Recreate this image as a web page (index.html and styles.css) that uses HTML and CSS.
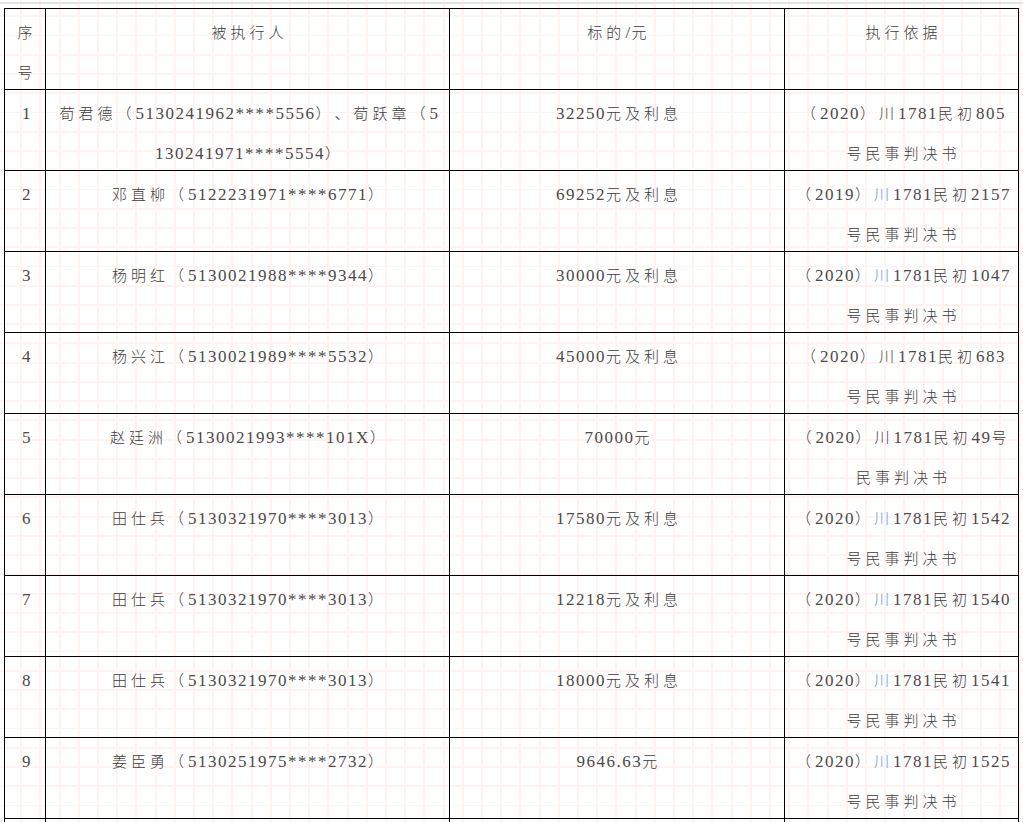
FILE: index.html
```html
<!DOCTYPE html>
<html lang="zh-CN">
<head>
<meta charset="utf-8">
<title>执行案件</title>
<link rel="stylesheet" href="styles.css">
</head>
<body>
<div class="topline"></div>
<div class="page">
<table class="tbl">
  <colgroup>
    <col class="w1"><col class="w2"><col class="w3"><col class="w4">
  </colgroup>
  <tr>
    <td class="c1"><div class="c">序号</div></td>
    <td class="c2"><div class="c">被执行人</div></td>
    <td class="c3"><div class="c">标的<span class="n">/</span>元</div></td>
    <td class="c4"><div class="c">执行依据</div></td>
  </tr>
  <tr>
    <td class="c1"><div class="c"><span class="n">1</span></div></td>
    <td class="c2"><div class="c">荀君德（<span class="n">5130241962****5556</span>）、荀跃章（<span class="n">5130241971****5554</span>）</div></td>
    <td class="c3"><div class="c"><span class="n">32250</span>元及利息</div></td>
    <td class="c4"><div class="c">（<span class="n">2020</span>）川<span class="n">1781</span>民初<span class="n">805</span>号民事判决书</div></td>
  </tr>
  <tr>
    <td class="c1"><div class="c"><span class="n">2</span></div></td>
    <td class="c2"><div class="c">邓直柳（<span class="n">5122231971****6771</span>）</div></td>
    <td class="c3"><div class="c"><span class="n">69252</span>元及利息</div></td>
    <td class="c4"><div class="c">（<span class="n">2019</span>）<span class="hl">川</span><span class="n">1781</span>民初<span class="n">2157</span>号民事判决书</div></td>
  </tr>
  <tr>
    <td class="c1"><div class="c"><span class="n">3</span></div></td>
    <td class="c2"><div class="c">杨明红（<span class="n">5130021988****9344</span>）</div></td>
    <td class="c3"><div class="c"><span class="n">30000</span>元及利息</div></td>
    <td class="c4"><div class="c">（<span class="n">2020</span>）<span class="hl">川</span><span class="n">1781</span>民初<span class="n">1047</span>号民事判决书</div></td>
  </tr>
  <tr>
    <td class="c1"><div class="c"><span class="n">4</span></div></td>
    <td class="c2"><div class="c">杨兴江（<span class="n">5130021989****5532</span>）</div></td>
    <td class="c3"><div class="c"><span class="n">45000</span>元及利息</div></td>
    <td class="c4"><div class="c">（<span class="n">2020</span>）川<span class="n">1781</span>民初<span class="n">683</span>号民事判决书</div></td>
  </tr>
  <tr>
    <td class="c1"><div class="c"><span class="n">5</span></div></td>
    <td class="c2"><div class="c">赵廷洲（<span class="n">5130021993****101X</span>）</div></td>
    <td class="c3"><div class="c"><span class="n">70000</span>元</div></td>
    <td class="c4"><div class="c">（<span class="n">2020</span>）川<span class="n">1781</span>民初<span class="n">49</span>号民事判决书</div></td>
  </tr>
  <tr>
    <td class="c1"><div class="c"><span class="n">6</span></div></td>
    <td class="c2"><div class="c">田仕兵（<span class="n">5130321970****3013</span>）</div></td>
    <td class="c3"><div class="c"><span class="n">17580</span>元及利息</div></td>
    <td class="c4"><div class="c">（<span class="n">2020</span>）<span class="hl">川</span><span class="n">1781</span>民初<span class="n">1542</span>号民事判决书</div></td>
  </tr>
  <tr>
    <td class="c1"><div class="c"><span class="n">7</span></div></td>
    <td class="c2"><div class="c">田仕兵（<span class="n">5130321970****3013</span>）</div></td>
    <td class="c3"><div class="c"><span class="n">12218</span>元及利息</div></td>
    <td class="c4"><div class="c">（<span class="n">2020</span>）<span class="hl">川</span><span class="n">1781</span>民初<span class="n">1540</span>号民事判决书</div></td>
  </tr>
  <tr>
    <td class="c1"><div class="c"><span class="n">8</span></div></td>
    <td class="c2"><div class="c">田仕兵（<span class="n">5130321970****3013</span>）</div></td>
    <td class="c3"><div class="c"><span class="n">18000</span>元及利息</div></td>
    <td class="c4"><div class="c">（<span class="n">2020</span>）<span class="hl">川</span><span class="n">1781</span>民初<span class="n">1541</span>号民事判决书</div></td>
  </tr>
  <tr>
    <td class="c1"><div class="c"><span class="n">9</span></div></td>
    <td class="c2"><div class="c">姜臣勇（<span class="n">5130251975****2732</span>）</div></td>
    <td class="c3"><div class="c"><span class="n">9646.63</span>元</div></td>
    <td class="c4"><div class="c">（<span class="n">2020</span>）<span class="hl">川</span><span class="n">1781</span>民初<span class="n">1525</span>号民事判决书</div></td>
  </tr>
  <tr>
    <td class="c1"><div class="c"></div></td>
    <td class="c2"><div class="c"></div></td>
    <td class="c3"><div class="c"></div></td>
    <td class="c4"><div class="c"></div></td>
  </tr>
</table>
</div>
</body>
</html>
```
FILE: styles.css
```css
html, body {
  margin: 0;
  padding: 0;
}
body {
  width: 1023px;
  height: 822px;
  overflow: hidden;
  background-color: #ffffff;
  background-image:
    repeating-linear-gradient(to right, transparent 0, transparent 17.2px, #fef3f1 17.2px, #fef3f1 19.2px),
    repeating-linear-gradient(to bottom, transparent 0, transparent 17.25px, #fef3f1 17.25px, #fef3f1 19.25px);
  background-position: 3px 0, 0 -2px;
  font-family: "Liberation Serif", "Noto Sans CJK SC", serif;
  font-size: 15px;
  font-weight: 300;
  color: #3c3c3c;
}
.topline {
  height: 2px;
  margin-top: 2px;
  background: #e4e4e4;
}
.page {
  padding: 4px 0 0 4px;
}
.tbl {
  border-collapse: separate;
  border-spacing: 0;
  table-layout: fixed;
  width: 1015px;
  border-left: 1px solid #000;
  border-top: 1px solid #000;
}
.w1 { width: 41px; }
.w2 { width: 404px; }
.w3 { width: 335px; }
.w4 { width: 234px; }
.tbl td {
  border-right: 1px solid #000;
  border-bottom: 1px solid #000;
  padding: 0;
  vertical-align: top;
  text-align: center;
}
.c {
  height: 76px;
  padding-top: 4px;
  line-height: 40px;
  letter-spacing: 4px;
  word-break: break-all;
  text-spacing-trim: space-all;
}
.n {
  font-family: "Liberation Serif", serif;
  font-size: 17px;
  font-weight: 400;
  line-height: 1;
  letter-spacing: 1.5px;
  color: #4a4a4a;
}
.c1 .c { padding-left: 8px; padding-right: 4px; }
.c2 .c { padding-left: 11px; padding-right: 7px; }
.c3 .c { padding-left: 11px; padding-right: 7px; }
.c4 .c { padding-left: 9px; padding-right: 5px; }
.hl {
  color: #5a95d8;
}
```
